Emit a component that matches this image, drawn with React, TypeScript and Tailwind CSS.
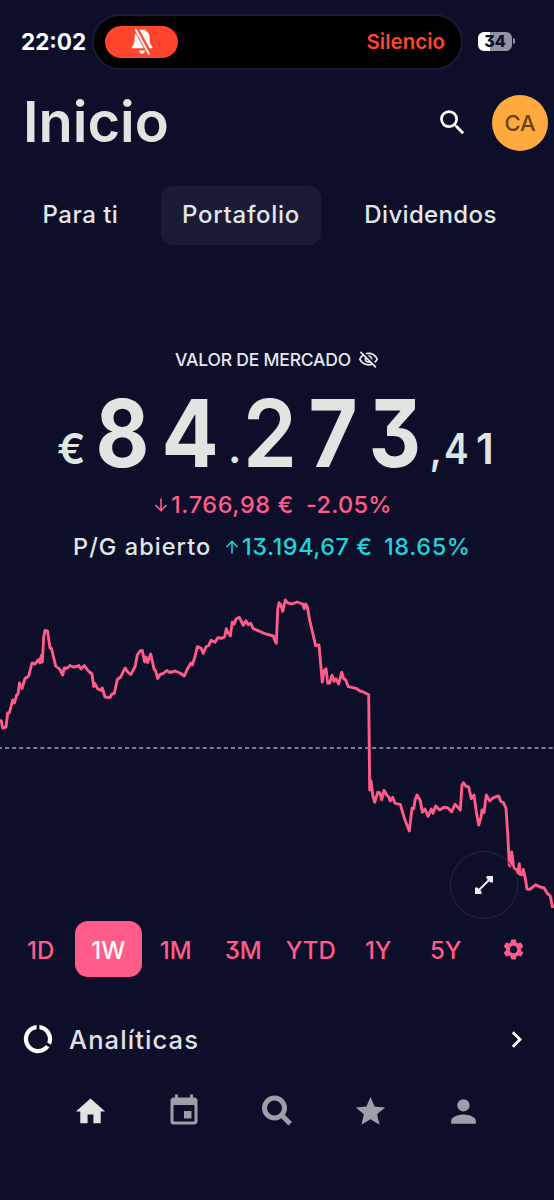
import type { ReactNode } from "react";
import {
  MdChevronRight,
  MdDataUsage,
  MdEvent,
  MdHome,
  MdOutlineVisibilityOff,
  MdPerson,
  MdSearch,
  MdSettings,
  MdStar,
} from "react-icons/md";

const CHART_POINTS =
  "0,720 1.3,721 2.7,728 6,727 7.7,713 9.3,713 12.7,700 14.3,703 16.7,695 18,694 19.5,683 22,688.5 25,678.5 28.7,676 32,663 35,664 38.7,659.5 40,663 41.3,655.5 42.3,662 43.7,637 45,630.5 47.5,631 50,648 51.3,648 55.7,666 60,669.5 62.7,675 64.3,668 66.7,668.5 70,665.5 73.3,667 76.7,666.5 78.7,665.5 81,669 84.3,665.5 88.3,671 92,674 93.7,686.5 95,683.5 97.3,688.5 101,690.5 102.3,688 105,697 110,697.5 112,694 114.3,693.5 117.3,679.5 120.7,677 123.3,671.5 125.3,668 127.7,672 130.7,674.5 135,667 137.3,655 140,651 142.3,650.5 144.7,662 146,657 147.7,662.5 150.7,654 154,669 155.7,671 157.7,678.5 160,674.5 163.3,673.5 166.7,670.5 170,672.5 175,671 180,673 184.3,676 187.7,668.5 191,663 192.3,665 195,656.7 197.3,646.7 201,648 203.3,653.3 206,646.7 208.7,645.5 211,640.3 215,642.3 217.7,637.7 221.7,638.3 224.7,636.7 226.3,628.7 228,632.7 230.3,636 232.3,622 234.3,624 236,619 239.3,617.3 243.3,625.3 246,620.7 248.3,624.7 250.7,623.3 253.3,628.7 258.3,630.7 265,633.7 273.3,636 274.7,640 276.3,643.3 277.7,610 279,602.7 280.7,604.7 282.7,611.3 285.3,600 287.3,602.7 291.7,604 297.3,602 302.7,604 304.3,608.7 305.7,604 307.3,606.7 310,621.7 315.7,645.7 319,645 322.3,682 324,670.7 326,668.7 327.7,683.3 329.7,683 332,675.3 334,681.3 336,678.7 338.7,684 341.7,672.3 343.7,678.7 345.7,680 348.3,686.7 356,688.3 360,691 363.3,692 368.7,694.7 369.7,790 371,780.7 372.7,795 374.7,802.3 377.7,792.3 379.7,792.7 381.7,799.7 384,790.3 386.7,795 388.7,797 390.3,801 392.7,797.3 395,803.3 400.3,804.3 404.7,819.3 409.3,831 412,808.3 413.7,808.7 415,800.3 417,795 420.3,800.7 422.3,812.3 425,809 428,816.3 431.3,809 433,813.3 435.7,806 439.7,810 444,807.3 448,808 451.7,811.7 455,804.3 460.3,810 462,785 463.3,782.7 466,786.3 468.7,787 471.3,798.7 474,795 476.3,811.7 478.7,825 481,817.3 482,810 484,812.7 486.3,795 489.7,801 493.3,797.7 498.7,796 501,801.7 503.3,802.3 506,808.3 507.7,833.3 509.3,865 510.3,866 511.7,852 513.7,868.3 517.3,870 518,873 519.3,863.7 520,874.3 522,874.7 523.3,869.3 525,876.7 527,889 530,889.3 535.7,884.7 540,887 544,888 547.3,893.3 550.3,896 552.7,908";

function StatusBar() {
  return (
    <div className="flex h-[84px] shrink-0 items-start pt-[14px] pl-[21px]">
      <div className="flex h-14 w-[71px] items-center text-[22.5px] font-bold text-white">
        22:02
      </div>
      <div className="flex h-14 w-[371px] items-center justify-between rounded-full border-2 border-[#191a35] bg-black pr-[16px] pl-[11px]">
        <div className="flex h-8 w-[73px] items-center justify-center rounded-full bg-[#ff452b]">
          <svg width="22" height="28" viewBox="0 0 22 28">
            <path
              d="M11 2.2c1-1 3-.7 3.6.6 2.4.9 3.8 3.2 3.9 6 .1 5.500.8 8.200 2.900 10.100.4.4.5 1.400-.5 1.400H1.400c-1 0-1-1-.5-1.400C3 17 3.500 14.300 3.700 8.800c.1-2.800 1.500-5.100 3.800-6C8.200 1.500 10 1.200 11 2.200zM8 22.600h6.200c-.3 2-1.500 3.200-3.100 3.200S8.300 24.600 8 22.600z"
              fill="#fff"
            />
            <path d="M5.500 1.500 18.500 25.500" stroke="#ff452b" strokeWidth="5" />
            <path d="M4.700 1.500 18 26" stroke="#fff" strokeWidth="1.900" strokeLinecap="round" />
          </svg>
        </div>
        <span className="text-[20.5px] font-semibold text-[#ff452b]">Silencio</span>
      </div>
      <div className="ml-[15px] flex h-14 items-center gap-px pb-0.5">
        <div className="flex h-[19px] w-[34px] items-center justify-center rounded-[6px] bg-linear-to-r from-white from-35% to-[#9192a4] to-35% text-[16px] leading-[19px] font-extrabold text-[#0d0e2a]">
          34
        </div>
        <div className="h-[6px] w-[2px] rounded-r-full bg-[#9192a4]" />
      </div>
    </div>
  );
}

function Header() {
  return (
    <header className="flex h-[78px] shrink-0 items-center pr-1.5 pl-[23px]">
      <h1 className="flex-1 pb-[2px] text-[56px] leading-[72px] font-semibold text-[#dfe6e1]">Inicio</h1>
      <MdSearch className="mr-[23px] mb-0.5 size-[33px] text-white" />
      <div className="flex size-14 items-center justify-center rounded-full bg-[#ffa93e] text-[22px] font-medium text-[#6c430f]">
        CA
      </div>
    </header>
  );
}

function Tabs() {
  return (
    <nav className="mt-6 flex h-[59px] shrink-0 text-[24px] font-medium text-[#e2e6e8]">
      <div className="flex w-[161px] items-center justify-center pb-0.5 tracking-[0.5px]">Para ti</div>
      <div className="flex w-40 items-center justify-center rounded-xl bg-[#1a1b36] pb-0.5 tracking-[0.7px]">
        Portafolio
      </div>
      <div className="flex w-[219px] items-center justify-center pb-0.5 tracking-[0.35px]">
        Dividendos
      </div>
    </nav>
  );
}

function Arrow({ up = false }: { up?: boolean }) {
  return (
    <svg width="14" height="14" viewBox="0 0 14 14" fill="none" stroke="currentColor" strokeWidth="1.6">
      {up ? <path d="M7 13.500V1.500M1.500 7 7 1.500 12.500 7" /> : <path d="M7 .5v12M1.500 7 7 12.500 12.500 7" />}
    </svg>
  );
}

function MarketValue() {
  return (
    <section className="flex shrink-0 flex-col pt-[101px]">
      <div className="flex h-7 items-center justify-center gap-[7px] text-[17.5px] font-medium text-[#e6e7ef]">
        <span className="tracking-[-0.2px]">VALOR DE MERCADO</span>
        <MdOutlineVisibilityOff className="mb-px size-[21px]" />
      </div>
      <div className="flex h-[110px] items-end pl-[57px] font-semibold text-[#dfe6e1]">
        <span className="w-[35px] pb-[10px] text-[42px] leading-[50px]">€</span>
        <span className="flex items-end pb-[11px] text-center text-[94px] leading-[80px]">
          <span className="w-[60px] scale-x-[0.88] font-bold">8</span>
          <span className="w-[76px] scale-x-[0.9] font-bold">4</span>
          <span className="w-[7px] text-[42px] leading-[50px]">.</span>
          <span className="w-[70px] scale-x-[0.93]">2</span>
          <span className="w-[56px] scale-x-[0.9] font-bold">7</span>
          <span className="w-[68px] scale-x-[0.86] font-bold">3</span>
        </span>
        <span className="flex pb-[10px] text-[42px] leading-[50px]">
          <span className="w-[15px] scale-x-90">,</span>
          <span className="w-[32px] origin-left scale-x-[0.88]">4</span>
          <span>1</span>
        </span>
      </div>
      <div className="flex h-[42px] items-center pl-[154px] text-[23.5px] font-medium text-[#ff5c8a]">
        <Arrow />
        <span className="ml-[3px] w-[135px] tracking-[0.6px] whitespace-nowrap">1.766,98 €</span>
        <span className="tracking-[0.3px] whitespace-nowrap">-2.05%</span>
      </div>
      <div className="flex h-[42px] items-center pl-[73px] text-[23.5px] font-medium text-[#1fd3dc]">
        <span className="w-[152px] tracking-[1.05px] whitespace-nowrap text-[#e2e6e8]">P/G abierto</span>
        <Arrow up />
        <span className="ml-[3px] w-[142px] tracking-[0.5px] whitespace-nowrap">13.194,67 €</span>
        <span className="tracking-[0.6px] whitespace-nowrap">18.65%</span>
      </div>
    </section>
  );
}

function Chart() {
  return (
    <section className="relative mt-[18px] h-[332px] shrink-0">
      <svg className="block h-[332px] w-full" viewBox="0 586 554 332" fill="none">
        <path d="M-2 748H554" stroke="#a3a4b6" strokeWidth="1.4" strokeDasharray="4 3.060" />
        <polyline points={CHART_POINTS} stroke="#ff5c8a" strokeWidth="2.900" strokeLinejoin="round" />
      </svg>
      <button className="absolute right-[36px] bottom-[-1px] flex size-[68px] items-center justify-center rounded-full border border-[#25263f]">
        <svg width="20" height="20" viewBox="0 0 20 20" fill="none">
          <path d="M3.500 16.500 16.500 3.500" stroke="#e8ecec" strokeWidth="1.900" />
          <path d="M12.500 1H19V7.500H16.500L12.500 3.500zM7.500 19H1V12.500H3.500L7.500 16.500z" fill="#e8ecec" />
        </svg>
      </button>
    </section>
  );
}

function Ranges() {
  return (
    <div className="mt-[3px] flex h-14 shrink-0 pl-[7px] text-[24px] font-medium text-[#ff5c8a]">
      {["1D", "1W", "1M", "3M", "YTD", "1Y", "5Y"].map((range) => (
        <div
          key={range}
          className={
            range === "1W"
              ? "flex w-[67.5px] items-center justify-center rounded-[13px] bg-[#ff5c8a] pt-[3px] text-white"
              : "flex w-[67.5px] items-center justify-center pt-[3px]"
          }
        >
          {range}
        </div>
      ))}
      <div className="flex w-[67.5px] items-center justify-center">
        <MdSettings className="size-[25px]" />
      </div>
    </div>
  );
}

function Analytics() {
  return (
    <div className="mt-[38px] flex h-12 shrink-0 items-center pr-[21px] pl-[21px]">
      <MdDataUsage className="size-[34px] text-white" />
      <span className="ml-[14px] flex-1 pt-[3px] text-[25.5px] font-medium tracking-[1.1px] text-[#e0e1e8]">
        Analíticas
      </span>
      <MdChevronRight className="size-[33px] text-white" />
    </div>
  );
}

function NavItem({ children }: { children: ReactNode }) {
  return <div className="flex items-center justify-center">{children}</div>;
}

function BottomNav() {
  return (
    <nav className="mt-[20px] grid h-14 shrink-0 grid-cols-5 px-11 text-[#9c9ea8]">
      <NavItem>
        <MdHome className="size-[35px] text-[#dfe6e1]" />
      </NavItem>
      <NavItem>
        <MdEvent className="size-9" />
      </NavItem>
      <NavItem>
        <svg width="32" height="32" viewBox="0 0 32 32" fill="none" stroke="currentColor" strokeWidth="5">
          <circle cx="13.500" cy="13" r="10" />
          <path d="m20 19.500 9.200 9.200" />
        </svg>
      </NavItem>
      <NavItem>
        <MdStar className="size-[35px]" />
      </NavItem>
      <NavItem>
        <MdPerson className="size-[37px]" />
      </NavItem>
    </nav>
  );
}

export default function App() {
  return (
    <main className="flex h-[1200px] w-[554px] flex-col overflow-hidden bg-[#0d0e2a] font-['Inter',sans-serif] [font-feature-settings:'cv09']">
      <StatusBar />
      <Header />
      <Tabs />
      <MarketValue />
      <Chart />
      <Ranges />
      <Analytics />
      <BottomNav />
    </main>
  );
}
